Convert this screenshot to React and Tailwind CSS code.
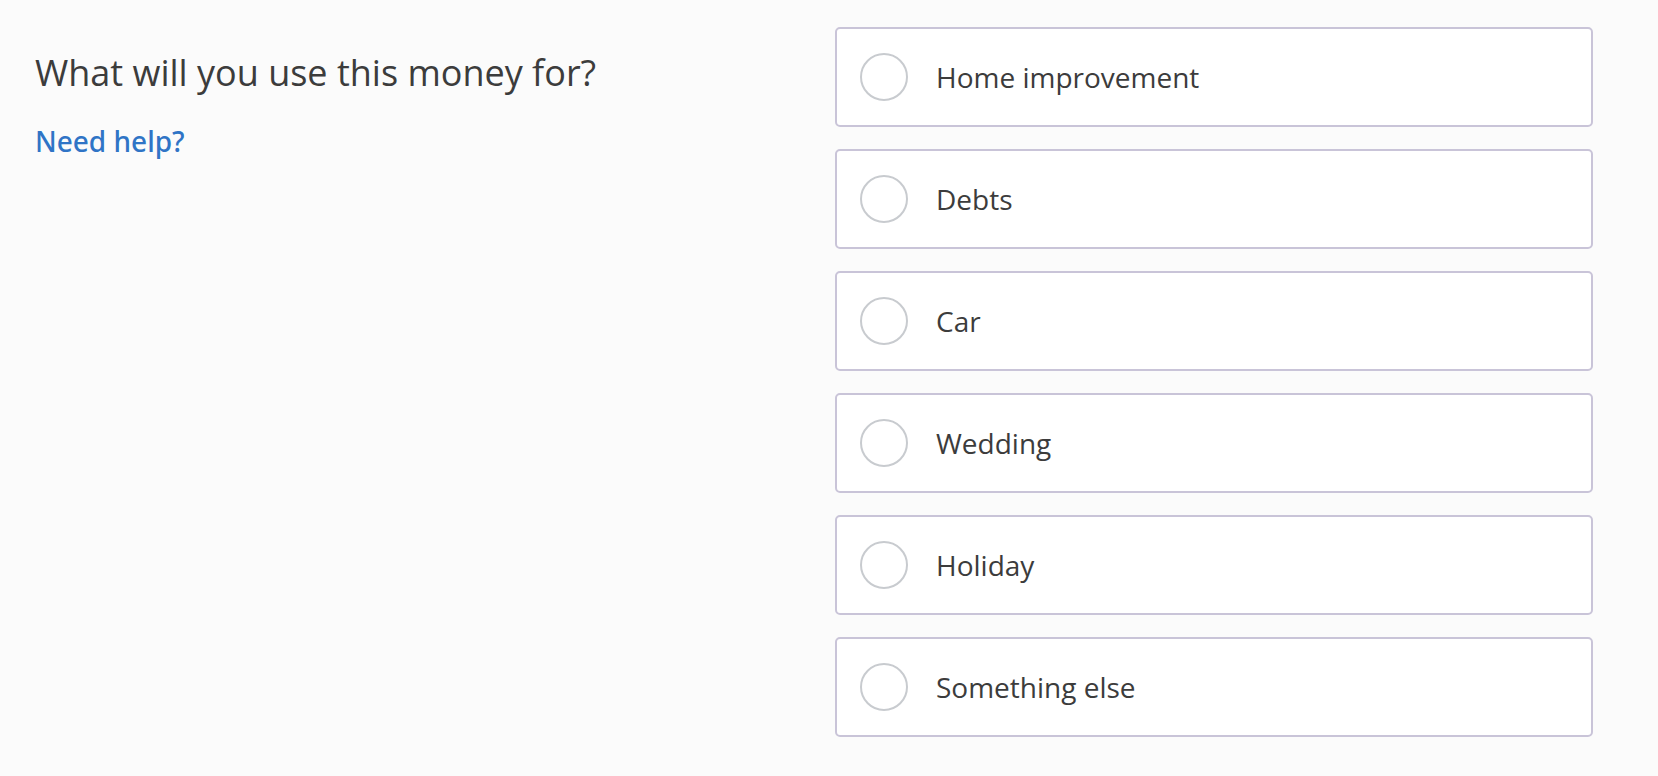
import { useState } from 'react'

const OPTIONS = [
  'Home improvement',
  'Debts',
  'Car',
  'Wedding',
  'Holiday',
  'Something else',
]

const App = () => {
  const [selected, setSelected] = useState(null)

  return (
    <main className="w-full min-h-screen bg-[#fbfbfb] flex flex-row pt-[27px] font-['Open_Sans',sans-serif] text-[#3c3c3c]">
      <div className="w-[835px] pl-[35px] pt-[22px] shrink-0">
        <h1 className="text-[36px] leading-[48px] font-normal">
          What will you use this money for?
        </h1>
        <a
          href="#"
          className="inline-block mt-[28px] text-[28px] leading-[32px] font-medium text-[#2f74c6] font-['Noto_Sans',sans-serif]"
        >
          Need help?
        </a>
      </div>

      <div className="w-[758px] flex flex-col gap-[22px]">
        {OPTIONS.map((option) => (
          <button
            key={option}
            type="button"
            onClick={() => setSelected(option)}
            className="h-[100px] w-full flex flex-row items-center pl-[23px] bg-white border-2 border-[#c9c4d8] rounded-[5px] text-left"
          >
            <span className="w-[48px] h-[48px] rounded-full border-2 border-[#c8cbcf] shrink-0 flex items-center justify-center">
              {selected === option && (
                <span className="w-[24px] h-[24px] rounded-full bg-[#2f74c6]" />
              )}
            </span>
            <span className="ml-[28px] text-[28px] leading-[36px]">{option}</span>
          </button>
        ))}
      </div>
    </main>
  )
}

export default App
